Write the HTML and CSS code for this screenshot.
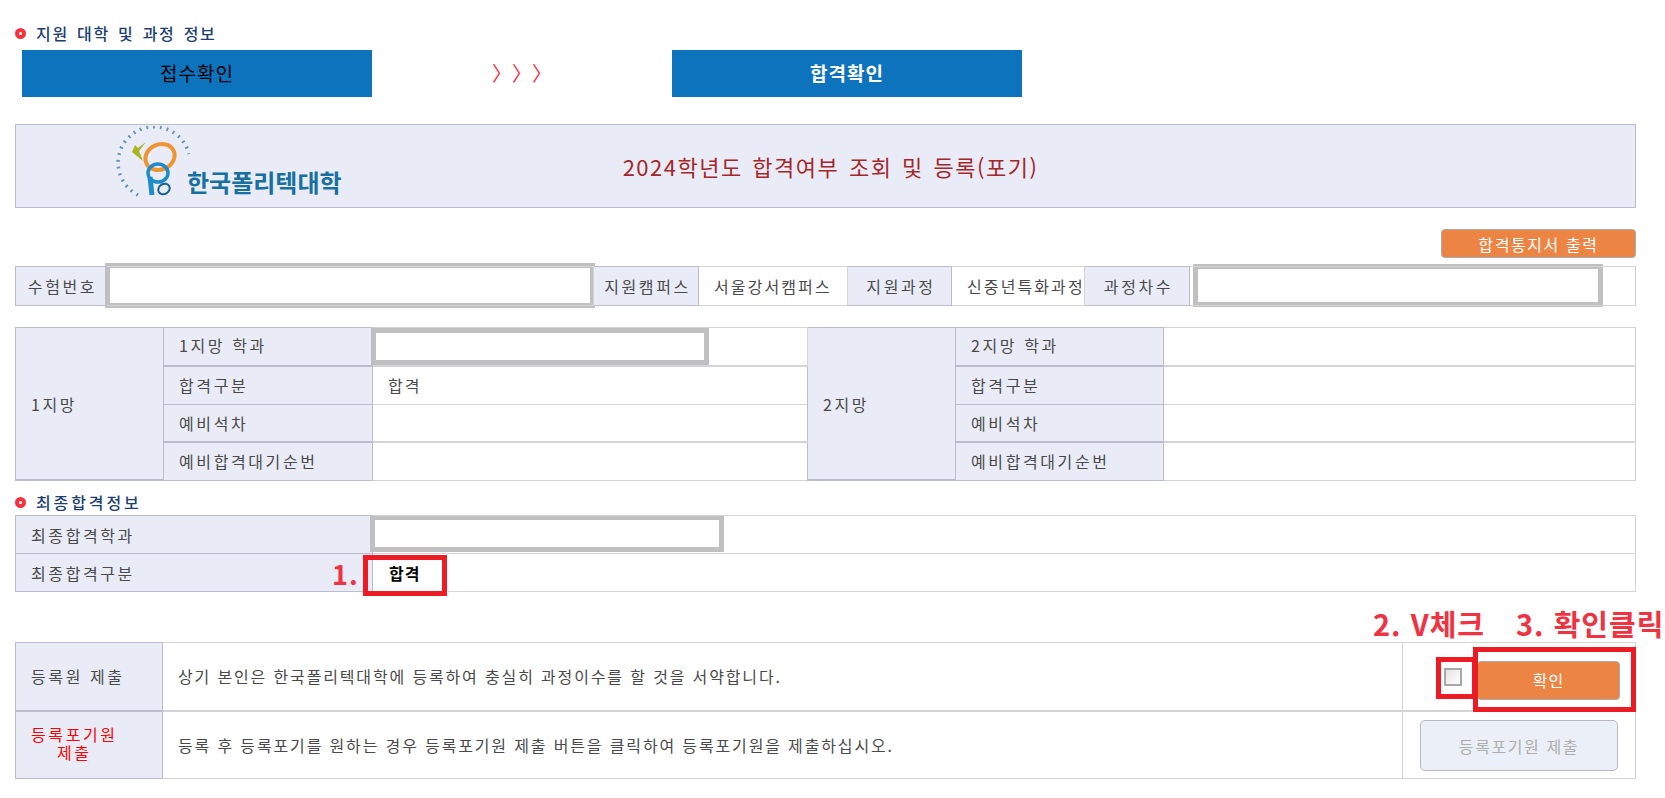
FILE: index.html
```html
<!DOCTYPE html>
<html lang="ko">
<head>
  <meta charset="UTF-8" />
  <meta name="viewport" content="width=device-width, initial-scale=1.0" />
  <title>합격여부 조회 및 등록</title>
  <link rel="stylesheet" href="styles.css">
</head>
<body>
  <div class="page">
    <h3 class="section-title title-first">지원 대학 및 과정 정보</h3>

    <div class="steps">
      <div class="step step-done">접수확인</div>
      <div class="step-arrows">〉〉〉</div>
      <div class="step step-current">합격확인</div>
    </div>

    <div class="banner">
      <div class="logo">
        <svg class="logo-mark" width="74" height="72" viewBox="0 0 74 72" aria-hidden="true">
          <path d="M22 69 A36 36 0 1 1 73 28" fill="none" stroke="#5f93b5" stroke-width="3.5" stroke-dasharray="1.8 5"/>
          <path d="M30 16 L23 25 L27 35 L16 26 L19 19 L22 22 Z" fill="#a9b51c"/>
          <ellipse cx="44" cy="31" rx="15" ry="12.5" transform="rotate(-25 44 31)" fill="none" stroke="#ee9433" stroke-width="4"/>
          <ellipse cx="42" cy="47" rx="10" ry="9" fill="none" stroke="#1e8ccb" stroke-width="3.5"/>
          <path d="M34 51 L36 69" fill="none" stroke="#1e8ccb" stroke-width="5"/>
          <ellipse cx="48" cy="63" rx="6" ry="5" transform="rotate(-30 48 63)" fill="none" stroke="#15628f" stroke-width="2"/>
        </svg>
        <span class="logo-text">한국폴리텍대학</span>
      </div>
      <h2 class="banner-title">2024학년도 합격여부 조회 및 등록(포기)</h2>
    </div>

    <div class="print-row">
      <button class="btn btn-print">합격통지서 출력</button>
    </div>

    <table class="info-table apply-table">
      <colgroup>
        <col style="width:91px"><col style="width:487px"><col style="width:105px"><col style="width:149px">
        <col style="width:104px"><col style="width:133px"><col style="width:105px"><col>
      </colgroup>
      <tr>
        <th>수험번호</th>
        <td class="masked"><input class="mask" type="text"></td>
        <th>지원캠퍼스</th>
        <td>서울강서캠퍼스</td>
        <th>지원과정</th>
        <td class="tight">신중년특화과정</td>
        <th>과정차수</th>
        <td class="masked masked-last"><input class="mask mask-small" type="text"></td>
      </tr>
    </table>

    <table class="info-table choice-table">
      <colgroup>
        <col style="width:148px"><col style="width:209px"><col style="width:435px">
        <col style="width:148px"><col style="width:208px"><col>
      </colgroup>
      <tr class="thick">
        <th rowspan="4" class="left">1지망</th>
        <th class="left">1지망 학과</th>
        <td class="masked"><input class="mask mask-dept" type="text"></td>
        <th rowspan="4" class="left">2지망</th>
        <th class="left">2지망 학과</th>
        <td></td>
      </tr>
      <tr>
        <th class="left">합격구분</th>
        <td>합격</td>
        <th class="left">합격구분</th>
        <td></td>
      </tr>
      <tr class="thick">
        <th class="left">예비석차</th>
        <td></td>
        <th class="left">예비석차</th>
        <td></td>
      </tr>
      <tr>
        <th class="left">예비합격대기순번</th>
        <td></td>
        <th class="left">예비합격대기순번</th>
        <td></td>
      </tr>
    </table>

    <h3 class="section-title title-final">최종합격정보</h3>

    <table class="info-table final-table">
      <colgroup><col style="width:357px"><col></colgroup>
      <tr>
        <th class="left">최종합격학과</th>
        <td class="masked"><input class="mask mask-final" type="text"></td>
      </tr>
      <tr>
        <th class="left">최종합격구분</th>
        <td class="result">합격</td>
      </tr>
    </table>

    <table class="info-table submit-table">
      <colgroup><col style="width:147px"><col><col style="width:233px"></colgroup>
      <tr class="thick">
        <th class="left">등록원 제출</th>
        <td>상기 본인은 한국폴리텍대학에 등록하여 충실히 과정이수를 할 것을 서약합니다.</td>
        <td>
          <div class="actions">
            <input class="agree" type="checkbox">
            <button class="btn btn-confirm">확인</button>
          </div>
        </td>
      </tr>
      <tr>
        <th class="left"><span class="giveup">등록포기원<br>제출</span></th>
        <td>등록 후 등록포기를 원하는 경우 등록포기원 제출 버튼을 클릭하여 등록포기원을 제출하십시오.</td>
        <td>
          <div class="actions actions-giveup">
            <button class="btn btn-giveup" disabled>등록포기원 제출</button>
          </div>
        </td>
      </tr>
    </table>

    <!-- annotations drawn on top of the captured page -->
    <div class="mark mark-result"></div>
    <div class="mark mark-check"></div>
    <div class="mark mark-confirm"></div>
    <span class="note note-1">1.</span>
    <span class="note note-2">2. V체크</span>
    <span class="note note-3">3. 확인클릭</span>
  </div>
</body>
</html>
```

FILE: styles.css
```css
:root {
  --th-bg: #e9ecf6;
  --th-border: #b9bdcd;
  --td-border: #d3d3d8;
  --navy: #1d3f72;
  --blue: #0e73bd;
  --orange: #ec8444;
  --mark-red: #ed1c24;
  --note-red: #ef3342;
}

* {
  box-sizing: border-box;
}

body {
  margin: 0;
  padding: 0;
  background: #ffffff;
  color: #4a4a4a;
  font-family: "Noto Sans CJK KR", "Noto Sans", sans-serif;
  font-size: 16px;
  overflow: hidden;
}

.page {
  position: relative;
  width: 1665px;
  height: 798px;
  padding: 21px 29px 0 15px;
}

.section-title {
  display: flex;
  align-items: center;
  margin: 0;
  height: 24px;
  color: var(--navy);
  font-size: 16px;
  font-weight: 500;
  white-space: pre;
}

.section-title::before {
  content: "";
  box-sizing: border-box;
  width: 11px;
  height: 11px;
  margin-right: 10px;
  border: 4px solid #f5333f;
  border-radius: 50%;
}

.title-first {
  letter-spacing: 1.7px;
  word-spacing: 2px;
}

.title-final {
  margin-top: 9px;
  letter-spacing: 2.9px;
}

.steps {
  display: flex;
  margin: 5px 0 0 7px;
}

.step {
  width: 350px;
  height: 47px;
  background: var(--blue);
  font-size: 19px;
  line-height: 45px;
  text-align: center;
  letter-spacing: 1px;
}

.step-done {
  color: #000000;
}

.step-current {
  color: #ffffff;
  font-weight: 700;
}

.step-arrows {
  width: 300px;
  color: #f5333f;
  font-size: 20px;
  line-height: 46px;
  text-align: center;
  text-spacing-trim: space-all;
}

.banner {
  display: grid;
  grid-template-columns: 1fr auto 1fr;
  align-items: center;
  height: 84px;
  margin-top: 27px;
  border: 1px solid var(--th-border);
  background: var(--th-bg);
}

.logo {
  display: flex;
  align-items: flex-end;
  padding-left: 100px;
  height: 71px;
  align-self: start;
  margin-top: 2px;
}

.logo-mark {
  flex: none;
  margin-right: -3px;
}

.logo-text {
  color: #17709f;
  font-size: 24px;
  font-weight: 700;
  line-height: 33px;
  white-space: nowrap;
}

.banner-title {
  margin: 0 0 0 10px;
  color: #a5272c;
  font-size: 22px;
  font-weight: 400;
  letter-spacing: 1.5px;
  word-spacing: 2px;
}

.print-row {
  display: flex;
  justify-content: flex-end;
  margin-top: 21px;
}

.btn {
  font-family: inherit;
  border: 1px solid #aaaaaa;
  border-radius: 4px;
  padding: 0;
}

.btn-print {
  width: 195px;
  height: 29px;
  background: var(--orange);
  color: #ffffff;
  font-size: 16px;
  letter-spacing: 1.6px;
}

.info-table {
  width: 1621px;
  table-layout: fixed;
  border-collapse: collapse;
}

.info-table th,
.info-table td {
  padding: 0 0 0 15px;
  white-space: nowrap;
  letter-spacing: 2.1px;
  font-size: 16px;
  border: 1px solid var(--td-border);
}

.info-table th {
  padding: 0 0 0 3px;
  background: var(--th-bg);
  border-color: var(--th-border);
  font-weight: 400;
  text-align: center;
  letter-spacing: 2.6px;
}

.info-table th.left {
  padding-left: 15px;
  text-align: left;
}

.info-table .masked {
  padding: 0;
}

.mask {
  display: block;
  width: calc(100% + 4px);
  height: 45px;
  margin: -4px -2px -3px;
  border: 5px solid #c0c0c0;
  background: #ffffff;
  outline: none;
}

.masked-last {
  padding: 0 32px 0 3px !important;
}

.mask-small {
  width: 100%;
  height: 43px;
  margin: -3px 0 -2px;
}

.mask-dept {
  width: 338px;
  height: 37px;
  margin: 0 0 0 -2px;
}

.mask-final {
  width: 354px;
  height: 37px;
  margin: -2px 0 0 -3px;
}

.apply-table {
  margin-top: 8px;
}

.apply-table tr {
  height: 38px;
}

.tight {
  overflow: visible;
  padding-right: 0 !important;
}

.choice-table {
  margin-top: 21px;
}

.choice-table tr {
  height: 38px;
}

.choice-table tr:first-child th:not([rowspan]) {
  padding-bottom: 3px;
}

.thick th,
.thick td {
  border-bottom-width: 2px;
}

.final-table {
  margin-top: 1px;
}

.final-table tr {
  height: 38px;
}

.info-table .result {
  padding-left: 16px;
  color: #000000;
  font-weight: 700;
  letter-spacing: 1px;
}

.submit-table {
  margin-top: 50px;
}

.submit-table tr {
  height: 68px;
}

.submit-table td {
  letter-spacing: 1.85px;
}

.giveup {
  display: inline-block;
  color: #ff0000;
  line-height: 18px;
  text-align: center;
}

.actions {
  display: flex;
  align-items: flex-start;
  justify-content: flex-end;
  gap: 15px;
  margin-top: 8px;
  padding-right: 15px;
  height: 39px;
}

.actions-giveup {
  height: 51px;
  margin-top: 2px;
  padding-right: 17px;
}

.agree {
  appearance: none;
  width: 18px;
  height: 18px;
  margin: 7px 0 0;
  border: 2px solid #a8a8a8;
  background: linear-gradient(135deg, #e4e4e4, #ffffff);
}

.btn-confirm {
  width: 143px;
  height: 39px;
  background: var(--orange);
  color: #ffffff;
  font-size: 16px;
  letter-spacing: 1px;
}

.btn-giveup {
  width: 198px;
  height: 51px;
  border-radius: 5px;
  border-color: #b8b8c0;
  background: #ebeff7;
  color: #aeaeae;
  font-size: 16px;
  letter-spacing: 1.6px;
}

.mark {
  position: absolute;
  border: 5px solid var(--mark-red);
  pointer-events: none;
}

.mark-result {
  left: 363px;
  top: 555px;
  width: 84px;
  height: 41px;
}

.mark-check {
  left: 1436px;
  top: 657px;
  width: 41px;
  height: 42px;
}

.mark-confirm {
  left: 1473px;
  top: 647px;
  width: 163px;
  height: 65px;
}

.note {
  position: absolute;
  color: var(--note-red);
  font-size: 29px;
  font-weight: 700;
  line-height: 34px;
  letter-spacing: 1px;
  white-space: nowrap;
}

.note-1 {
  left: 332px;
  top: 557px;
  font-size: 27px;
}

.note-2 {
  left: 1373px;
  top: 606px;
}

.note-3 {
  left: 1516px;
  top: 606px;
}
```
